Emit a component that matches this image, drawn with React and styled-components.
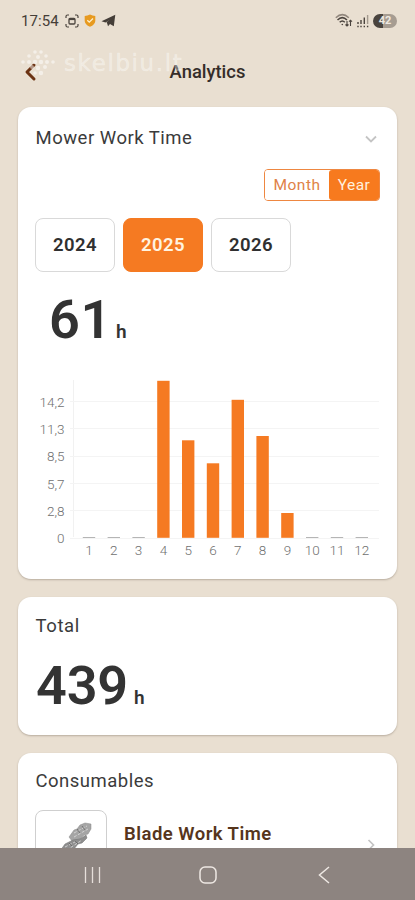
import React from "react";
import styled, { createGlobalStyle } from "styled-components";

const GlobalStyle = createGlobalStyle`
  * { box-sizing: border-box; }
  html, body { margin: 0; padding: 0; background: #e9dfd1; }
  body { font-family: Roboto, "Liberation Sans", sans-serif; color: #333; overflow: hidden; }
  button { font: inherit; letter-spacing: inherit; margin: 0; padding: 0; }
  svg { display: block; flex: none; }
`;

const Screen = styled.div`
  position: relative;
  width: 415px;
  height: 900px;
  overflow: hidden;
  display: flex;
  flex-direction: column;
  background: #e9dfd1;
`;

const StatusBar = styled.div`
  height: 41px;
  padding: 0 18px 0 21px;
  display: flex;
  align-items: center;
  justify-content: space-between;
`;

const StatusGroup = styled.div`
  display: flex;
  align-items: center;
  gap: ${(p) => p.$gap}px;
`;

const Clock = styled.span`
  font-size: 15px;
  line-height: 18px;
  letter-spacing: 0.1px;
  color: #453e38;
  width: 38px;
  margin-right: 1px;
`;

const Battery = styled.div`
  width: 24px;
  height: 14px;
  border-radius: 7px;
  display: flex;
  align-items: center;
  justify-content: center;
  font-size: 11px;
  line-height: 14px;
  font-weight: 700;
  color: #efe9e0;
  background: linear-gradient(90deg, #4a443e 0 42%, #a69c91 42%);
`;

const Header = styled.header`
  height: 66px;
  padding: 20px 0 0 24px;
  display: flex;
  align-items: flex-start;
`;

const BackButton = styled.button`
  width: 15px;
  height: 22px;
  border: 0;
  background: none;
  display: flex;
  align-items: center;
`;

const Title = styled.h1`
  flex: 1;
  margin: 0 39px 0 0;
  text-align: center;
  font-size: 18.4px;
  line-height: 21px;
  font-weight: 500;
  color: #352d29;
`;

const Watermark = styled.div`
  position: absolute;
  left: 20px;
  top: 47px;
  display: flex;
  align-items: center;
  gap: 8px;
  color: rgba(255, 255, 255, 0.36);
  font-family: "DejaVu Sans", sans-serif;
  font-size: 23px;
  line-height: 32px;
  letter-spacing: 1.6px;
  -webkit-text-stroke: 0.5px rgba(255, 255, 255, 0.3);
  pointer-events: none;
`;

const Cards = styled.main`
  display: flex;
  flex-direction: column;
  flex: 1;
  min-height: 0;
  gap: 18px;
  padding: 0 18px;
`;

const Card = styled.section`
  flex: none;
  height: ${(p) => p.$height}px;
  padding: ${(p) => p.$top}px 17px 0;
  background: #fff;
  border-radius: 13px;
  box-shadow: 0 1px 2px rgba(95, 80, 65, 0.35);
`;

const CardHeader = styled.div`
  display: flex;
  justify-content: space-between;
  align-items: center;
  height: 21px;
  padding-right: 3px;
`;

const CardTitle = styled.h2`
  margin: 0;
  padding-left: 0.5px;
  font-size: 18.5px;
  line-height: 21px;
  font-weight: 400;
  letter-spacing: ${(p) => p.$track || 0.5}px;
  color: #3b3b3b;
`;

const Toggle = styled.div`
  width: 116px;
  height: 32px;
  margin: 20px 0 0 auto;
  display: flex;
  overflow: hidden;
  border: 1px solid #ee8741;
  border-radius: 4px;
`;

const ToggleOption = styled.button`
  width: ${(p) => p.$width}px;
  border: 0;
  font-size: 15.5px;
  letter-spacing: 0.5px;
  border-radius: ${(p) => (p.$active ? "3px 0 0 3px" : "0")};
  background: ${(p) => (p.$active ? "#f77a1e" : "#fff")};
  color: ${(p) => (p.$active ? "#fff1df" : "#e08248")};
`;

const Years = styled.div`
  display: flex;
  gap: 8px;
  margin-top: 17px;
`;

const YearButton = styled.button`
  width: 80px;
  height: 54px;
  border: 1.5px solid ${(p) => (p.$active ? "#f57a22" : "#d9d9d9")};
  border-radius: 8px;
  background: ${(p) => (p.$active ? "#f57a22" : "#fff")};
  color: ${(p) => (p.$active ? "#fff3e0" : "#303030")};
  font-size: 18.5px;
  font-weight: 600;
  letter-spacing: 0.4px;
`;

const Reading = styled.div`
  display: flex;
  align-items: baseline;
  gap: ${(p) => p.$gap}px;
  margin: ${(p) => p.$top}px 0 0 ${(p) => p.$left}px;
  line-height: 60px;
  color: #333;
`;

const ReadingValue = styled.span`
  font-size: 54px;
  font-weight: 600;
  letter-spacing: ${(p) => p.$track}px;
`;

const ReadingUnit = styled.span`
  font-size: 19px;
  font-weight: 600;
`;

const Chart = styled.svg`
  margin-top: 12px;
`;

const AxisText = styled.text`
  font-size: 13.5px;
  font-weight: 300;
  fill: #707070;
`;

const ConsumableRow = styled.div`
  display: flex;
  margin-top: 18px;
`;

const Thumbnail = styled.div`
  width: 72px;
  height: 72px;
  border: 1.5px solid #cfcfcf;
  border-radius: 8px;
  overflow: hidden;
`;

const ConsumableName = styled.span`
  flex: 1;
  margin: 13px 0 0 17px;
  font-size: 18.5px;
  line-height: 22px;
  font-weight: 600;
  letter-spacing: 0.47px;
  color: #56351c;
`;

const RowArrow = styled.div`
  padding: 29px 5px 0 0;
`;

const NavBar = styled.nav`
  position: absolute;
  left: 0;
  right: 0;
  bottom: 0;
  height: 52px;
  padding: 2px 85px 0 84px;
  display: grid;
  grid-template-columns: 115px 1fr auto;
  align-items: center;
  background: #8d8480;
`;

const gridLines = [
  ["14,2", 27], ["11,3", 54.3], ["8,5", 81.7], ["5,7", 109], ["2,8", 136.3], ["0", 163.5],
];
const barHeights = [0, 0, 0, 157, 97.5, 74.5, 138, 101.8, 24.8, 0, 0, 0];

function WorkChart() {
  return (
    <Chart width="345" height="190" viewBox="0 0 345 190">
      <path d="M38.500 6V163" stroke="#f1f1f1" />
      {gridLines.map(([label, y]) => (
        <g key={label}>
          <path d={`M35 ${Math.round(y) + 0.5}H344`} stroke="#f4f4f4" />
          <AxisText x="29.500" y={y + 5.5} textAnchor="end">{label}</AxisText>
        </g>
      ))}
      {barHeights.map((h, i) => {
        const x = 54 + i * 24.8;
        return (
          <g key={i}>
            {h > 0
              ? <rect x={x - 6.2} y={163.8 - h} width="12.4" height={h} fill="#f57a22" />
              : <path d={`M${x - 6.2} 163.500h12.4`} stroke="#b5b5b5" />}
            <AxisText x={x} y="181" textAnchor="middle">{i + 1}</AxisText>
          </g>
        );
      })}
    </Chart>
  );
}

const CaptureIcon = () => (
  <svg width="14" height="14" viewBox="0 0 14 14" fill="none" stroke="#4b443e" strokeWidth="1.2">
    <path d="M1 4V2.5Q1 1 2.5 1H4M10 1h1.5Q13 1 13 2.5V4M13 10v1.500Q13 13 11.500 13H10M4 13H2.500Q1 13 1 11.500V10" />
    <rect x="4" y="4.500" width="6" height="5.500" rx="1" strokeWidth="1.300" />
    <path d="M4 5.300h6" strokeWidth="1.600" />
  </svg>
);

const ShieldIcon = () => (
  <svg width="12" height="13" viewBox="0 0 12 13">
    <path d="M6 .5Q8.500 1.800 11.300 2.100V7Q11 10.800 6 12.700 1 10.800.7 7V2.100Q3.500 1.800 6 .5Z" fill="#e79a20" />
    <path d="m3.300 6.200 2 2L9 4.500" fill="none" stroke="#fff0cb" strokeWidth="1.300" />
  </svg>
);

const TelegramIcon = () => (
  <svg width="15" height="13" viewBox="0 0 15 13">
    <path d="M.5 7.300 14.300.700 12.800 12.300 9 10 7 12.300 6 8.800 10.500 5 4.500 8.400Z" fill="#453e38" />
    <path d="M6 8.800 11 4.500" stroke="#453e38" strokeWidth="1.600" />
  </svg>
);

const WifiIcon = () => (
  <svg width="18" height="15" viewBox="0 0 18 15" fill="none" stroke="#4b443e" strokeWidth="1.500">
    <path d="M.8 4.800Q7.300-1.600 13.800 4.800" stroke="#91877d" />
    <path d="M2.500 7Q7.300 2.300 12 7M4.700 9.200Q7.300 6.700 9.800 9.200" />
    <circle cx="7.300" cy="11.500" r=".8" fill="#4b443e" stroke="none" />
    <path d="M12 8v5M10.500 11.500 12 13l1.500-1.500M15.500 13V7M14 8.700l1.500-1.500L17 8.700" strokeWidth="1.100" />
  </svg>
);

const SignalIcon = () => (
  <svg width="12" height="14" viewBox="0 0 12 14" fill="none" strokeWidth="1.400">
    <path d="M1 10V8M4 10V6M7.300 10V3.500" stroke="#4b443e" />
    <path d="M10.600 10V1" stroke="#a3998e" />
    <path d="M.3 12.500h1.400m1.600 0h1.400m1.900 0H8m1.900 0h1.400" stroke="#4b443e" />
  </svg>
);

const markDots = [
  [15, 3, 1.800], [21, 3, 1.800], [9, 7, 1.800], [18, 8, 2], [26, 7, 1.800],
  [3, 13, 1.800], [9, 13, 2], [15, 13, 2.200], [21, 13, 2.200], [27, 13, 2], [33, 13, 1.800],
  [12, 18, 2], [18, 19, 2.200], [25, 18, 2], [15, 24, 1.800], [21, 24, 2.200],
];

const WatermarkLogo = () => (
  <svg width="36" height="28" viewBox="0 0 36 28" fill="rgba(255, 255, 255, 0.5)">
    {markDots.map(([x, y, r]) => <circle key={`${x}-${y}`} cx={x} cy={y} r={r} />)}
  </svg>
);

const BladeImage = () => (
  <svg width="69" height="69" viewBox="0 0 69 69">
    <g strokeWidth=".5">
      <path d="m33 26 5-7 3-1 3-4 5-2 6 1v5l-3 5-4 1-4 4-8 2Z" fill="#a5a5a5" stroke="#8a8a8a" />
      <path d="m24 40 5-7 4-2 4-2 7-1 6-4 1 3-5 5-4 1-4 5-9 5Z" fill="#8e8e8e" stroke="#707070" />
    </g>
    <g strokeWidth=".8" fill="none">
      <path d="m38 22 13-7M38 26l14-8M29 36l12-6M31 39l15-10" stroke="#ddd" strokeDasharray="3 1.500" />
      <path d="m41 18 3 4m2-7 3 4M33 32l3 3m3-5 3 3" stroke="#666" />
    </g>
  </svg>
);

export default function App() {
  return (
    <Screen>
      <GlobalStyle />
      <StatusBar>
        <StatusGroup $gap={5}>
          <Clock>17:54</Clock>
          <CaptureIcon />
          <ShieldIcon />
          <TelegramIcon />
        </StatusGroup>
        <StatusGroup $gap={4}>
          <WifiIcon />
          <SignalIcon />
          <Battery>42</Battery>
        </StatusGroup>
      </StatusBar>
      <Header>
        <BackButton aria-label="Back">
          <svg width="15" height="20" viewBox="0 0 15 20">
            <path d="m10 3-7 7 7 7" fill="none" stroke="#6b3212" strokeWidth="3" strokeLinecap="round" strokeLinejoin="round" />
          </svg>
        </BackButton>
        <Title>Analytics</Title>
      </Header>
      <Watermark><WatermarkLogo />skelbiu.lt</Watermark>
      <Cards>
        <Card $height={472} $top={21}>
          <CardHeader>
            <CardTitle>Mower Work Time</CardTitle>
            <svg width="12" height="8" viewBox="0 0 12 8">
              <path d="m1 1.500 5 5 5-5" fill="none" stroke="#c4c4c4" strokeWidth="1.800" />
            </svg>
          </CardHeader>
          <Toggle>
            <ToggleOption $width={64}>Month</ToggleOption>
            <ToggleOption $width={50} $active>Year</ToggleOption>
          </Toggle>
          <Years>
            <YearButton>2024</YearButton>
            <YearButton $active>2025</YearButton>
            <YearButton>2026</YearButton>
          </Years>
          <Reading $top={18} $left={14} $gap={4}>
            <ReadingValue $track={0.6}>61</ReadingValue>
            <ReadingUnit>h</ReadingUnit>
          </Reading>
          <WorkChart />
        </Card>
        <Card $height={138} $top={19}>
          <CardTitle $track={0.6}>Total</CardTitle>
          <Reading $top={19} $left={1} $gap={6}>
            <ReadingValue $track={-0.2}>439</ReadingValue>
            <ReadingUnit>h</ReadingUnit>
          </Reading>
        </Card>
        <Card $height={200} $top={18}>
          <CardTitle>Consumables</CardTitle>
          <ConsumableRow>
            <Thumbnail><BladeImage /></Thumbnail>
            <ConsumableName>Blade Work Time</ConsumableName>
            <RowArrow>
              <svg width="8" height="12" viewBox="0 0 8 12">
                <path d="m1.500 1 5 5-5 5" fill="none" stroke="#c4c4c4" strokeWidth="1.700" />
              </svg>
            </RowArrow>
          </ConsumableRow>
        </Card>
      </Cards>
      <NavBar>
        <svg width="17" height="18" viewBox="0 0 17 18">
          <path d="M1.500 1v16M8.500 1v16M15.500 1v16" stroke="#e6dfda" strokeWidth="1.300" />
        </svg>
        <svg width="18" height="18" viewBox="0 0 18 18">
          <rect x="1" y="1" width="16" height="16" rx="5" fill="none" stroke="#eee8e3" strokeWidth="1.500" />
        </svg>
        <svg width="12" height="18" viewBox="0 0 12 18">
          <path d="M11 1 1.500 9 11 17" fill="none" stroke="#eee8e3" strokeWidth="1.500" />
        </svg>
      </NavBar>
    </Screen>
  );
}
